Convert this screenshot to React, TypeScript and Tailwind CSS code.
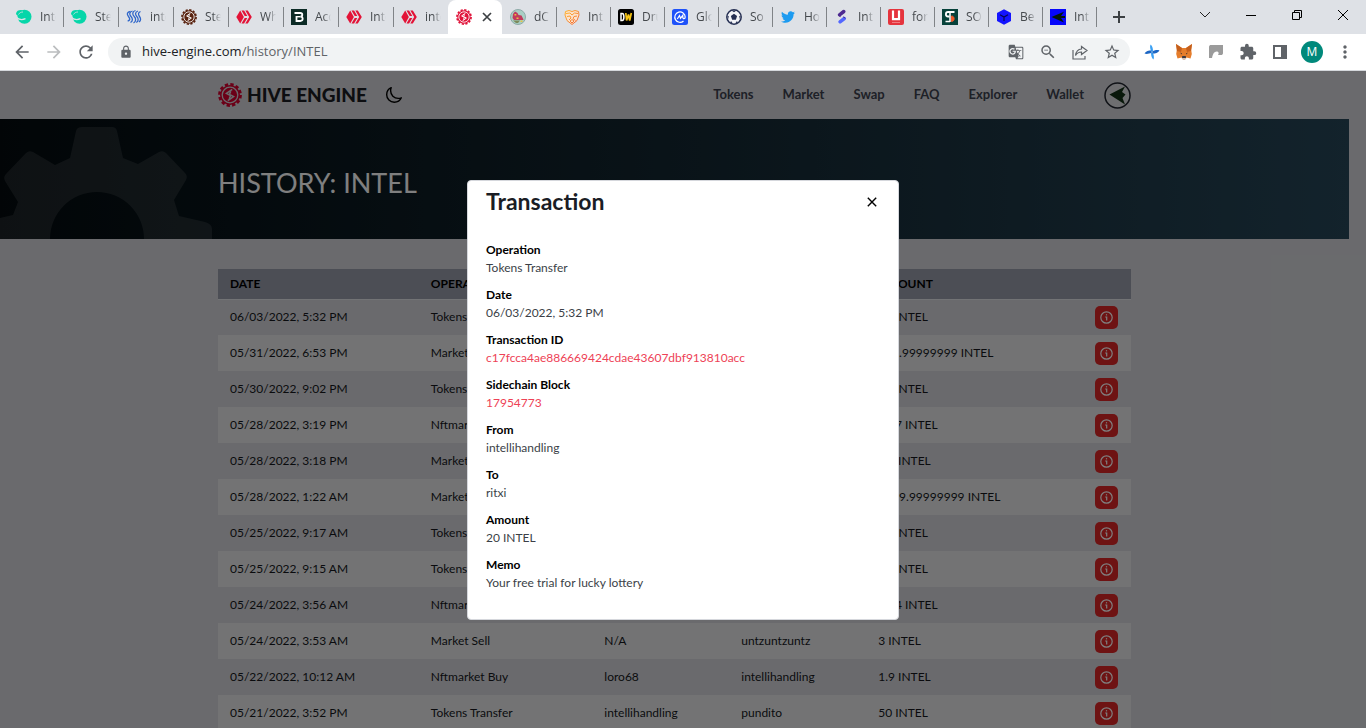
import type { ReactNode } from 'react'
import { FaTwitter } from 'react-icons/fa'
import { IoMoonOutline } from 'react-icons/io5'
import {
  MdArrowBack,
  MdArrowForward,
  MdExtension,
  MdGTranslate,
  MdLock,
  MdMoreVert,
  MdRefresh,
  MdStarBorder,
  MdZoomOut,
} from 'react-icons/md'

interface Tab {
  title: string
  icon: ReactNode
}

interface Row {
  date: string
  operation: string
  from: string
  to: string
  amount: string
}

const SteemIcon = () => (
  <svg viewBox="0 0 16 16" className="h-4 w-4">
    <circle cx="8.500" cy="7.800" r="7" fill="#06d6a9" />
    <path d="M0 4.500C.5 2 3 .8 6 1.200L4 7C2 7 .2 6.500 0 4.500z" fill="#06d6a9" />
    <path d="M0 8c3 3 6 3.200 9.500 1.700" stroke="#dee1e6" strokeWidth="1.300" fill="none" />
    <path d="M2.500 5.500C3.500 3.800 5 3 7 3" stroke="#dee1e6" strokeWidth=".8" fill="none" />
  </svg>
)

const WavesIcon = () => (
  <svg viewBox="0 0 16 16" className="h-4 w-4" fill="none" stroke="#2f66c9" strokeWidth="1.300">
    <path d="M4.500 2.500C1 3 .5 5 2.500 7.500s1.500 4-.8 4.500" />
    <path d="M6.500 2C3 3 3.200 5.500 5 7.500s2 4.500-.5 6" />
    <path d="M9.500 1.500c-3.500 1-3.300 4-1.300 6s2 5-.7 6.500" />
    <path d="M12 2c-3 1-3 3.500-1.200 5.500s2 4.500-.5 6" />
    <path d="M14.500 2.500c-2.500 1-2.500 3-1 5s1.500 4-.5 5.500" />
  </svg>
)

/** Toothed ring shared by the Hive Engine mark and its favicons. */
const Cog = ({ color, inner, className }: { color: string; inner: string; className: string }) => (
  <svg viewBox="0 0 24 24" className={className}>
    <circle cx="12" cy="12" r="10.600" fill="none" stroke={color} strokeWidth="2.600" strokeDasharray="3.330 2.220" />
    <circle cx="12" cy="12" r="10" fill={color} />
    <circle cx="12" cy="12" r="7.800" fill="none" stroke={inner} strokeWidth="1.300" />
    <path d="M14.200 6.300 8.400 10.400l4.200 2.200-1.400 3.200M9.800 17.700l5.800-4.100-4.200-2.200 1.400-3.200" fill="none" stroke={inner} strokeWidth="1.500" />
  </svg>
)

const HiveIcon = () => (
  <svg viewBox="0 0 16 16" className="h-4 w-4" fill="#e31337">
    <path d="M4.200 1.500 7.900 8l-3.700 6.500L.3 8z" />
    <path d="M5.500 1.500h2.600l3.200 5.500H8.700zM8.700 9h2.600l-3.200 5.500H5.500z" />
    <path d="M9.300 1.500h2.500L15.800 8l-4 6.500H9.300L13.200 8z" />
  </svg>
)

const BoldBIcon = () => (
  <svg viewBox="0 0 16 16" className="h-4 w-4">
    <rect width="16" height="16" fill="#0c2b26" />
    <path d="M3.500 4h5.700c2.800 0 2.800 3.700 0 3.700 3.300 0 3.300 4.300 0 4.300H5.500V7" fill="none" stroke="#fff" strokeWidth="1.800" />
    <path d="M6 7.700h3" stroke="#fff" strokeWidth="1.400" />
  </svg>
)

const ParkIcon = () => (
  <svg viewBox="0 0 16 16" className="h-4 w-4">
    <circle cx="8" cy="8" r="7.500" fill="#a9cfc4" stroke="#8eaaa8" />
    <path d="M3 5l2-2.500L7.500 4l1 2 3 .5L13 9.500l.5 1.500H4L2.500 9z" fill="#c23a5c" />
    <path d="M4.500 5h1.800v1.500H4.500zM6.500 8.500h2V10h-2zM10.500 11.500h2V13h-2z" fill="#e8c33e" />
    <path d="M3 11.500h7l-2 2.500H6z" fill="#7d8a5b" />
  </svg>
)

const LionIcon = () => (
  <svg viewBox="0 0 16 16" className="h-4 w-4">
    <defs>
      <linearGradient id="lion" x1="0" y1="0" x2="1" y2="1">
        <stop offset="0" stopColor="#ffb52e" />
        <stop offset="1" stopColor="#f1653a" />
      </linearGradient>
    </defs>
    <path d="M1.500 2.500 5 1.500l3 1 3-1 3.500 1L15 6l-2 5.500-5 4-5-4L1 6z" fill="#fbe3cd" stroke="url(#lion)" />
    <path d="M2 4.500 6 4l2 2 2.500-2 3.500.5M3 7.500l3-.5 1 2-2 2M13 7l-3 .5-1 2 2.500 2M6 12l2-1.500 2 1.500-2 2z" fill="none" stroke="url(#lion)" />
  </svg>
)

const DwIcon = () => (
  <svg viewBox="0 0 16 16" className="h-4 w-4">
    <rect width="16" height="16" rx="2.500" fill="#000" />
    <path d="M3 4.500h1.200c1.200 0 1.700.8 1.700 3.500s-.5 3.500-1.700 3.500H3z" fill="none" stroke="#fff" strokeWidth="1.500" />
    <path d="M7.800 4l.8 7.500L10.500 5.500l1.200 6L13.300 4" fill="none" stroke="#f7c514" strokeWidth="1.700" />
  </svg>
)

const CoinIcon = () => (
  <svg viewBox="0 0 16 16" className="h-4 w-4">
    <rect width="16" height="16" rx="2.500" fill="#1f52f9" />
    <path
      d="M11.500 12A5.200 5.200 0 1 1 13.200 8c0 2.200-2.400 2-2.400.3V6.300L8.500 9.300 7.500 6.500 5.300 10"
      fill="none"
      stroke="#fff"
      strokeWidth="1.200"
    />
  </svg>
)

const BallIcon = () => (
  <svg viewBox="0 0 16 16" className="h-4 w-4">
    <circle cx="8" cy="8" r="7.200" fill="#f2f3f7" stroke="#252f52" strokeWidth="1.500" />
    <path d="M8 4.800l3.100 2.300-1.200 3.700H6.100L4.900 7.100z" fill="#252f52" />
    <path
      d="M5.500 1.500h5L8 3.200zM1.300 6.300l1.500 1-.7 3zM14.700 6.300l-1.500 1 .7 3zM3.500 13l2.300-.5.7 2zM12.500 13l-2.300-.5-.7 2z"
      fill="#252f52"
    />
  </svg>
)

const SplitIcon = () => (
  <svg viewBox="0 0 16 16" className="h-4 w-4" strokeWidth="3.500" strokeLinecap="round">
    <path d="M5.500 5.800 9.800 2.500" stroke="#4d2a91" />
    <path d="M6 12.800 10.300 9.500" stroke="#5468ff" />
    <path d="M4.800 6.500l1.500 1M9.500 8l1.500 1" stroke="#4d2a91" strokeWidth="1" />
  </svg>
)

const UIcon = () => (
  <svg viewBox="0 0 16 16" className="h-4 w-4">
    <rect width="16" height="16" rx="2" fill="#e5343d" />
    <path d="M5 1.500v8.700h6V1.500" fill="none" stroke="#fff" strokeWidth="2.200" />
    <path d="M4 13.500h8" stroke="#f07b80" />
  </svg>
)

const SIcon = () => (
  <svg viewBox="0 0 16 16" className="h-4 w-4">
    <rect width="16" height="16" fill="#07423b" />
    <path d="M12.500 3H6C3.200 3 3.200 7.500 6 7.500h1.500" fill="none" stroke="#fff" strokeWidth="1.800" />
    <path d="M8 3v10M3.500 12.500h4.500" stroke="#fff" strokeWidth="1.500" />
    <path d="M9.500 7c3.500 0 3.500 5.500 0 5.500z" fill="#f15a29" stroke="#f15a29" />
  </svg>
)

const CubeIcon = () => (
  <svg viewBox="0 0 16 16" className="h-4 w-4">
    <path d="M8 .3 15 4v8l-7 3.800L1 12V4z" fill="#1414ff" />
    <path d="M4 5.800l4 2.300 4-2.300M8 8.100V12" fill="none" stroke="#07074d" strokeWidth="1.100" />
  </svg>
)

const ArrowheadIcon = () => (
  <svg viewBox="0 0 16 16" className="h-4 w-4">
    <rect width="16" height="16" fill="#0606fb" />
    <path d="M1.500 8 14 2.800 11 7h4v2h-4l3 4.500z" fill="#03160a" />
  </svg>
)

const FoxIcon = () => (
  <svg viewBox="0 0 18 18" className="h-[18px] w-[18px]">
    <path d="M1 1l6 4h4l6-4-.8 6 .6 4-1.300 4.500-4-1L10 16H8l-1.500-1.500-4 1L1.200 11l.6-4z" fill="#e57d2b" />
    <path d="M1 1l6 4-1 4-4-1zM17 1l-6 4 1 4 4-1z" fill="#c45f1c" />
    <path d="M5 9.500l2 1-.3 1zM13 9.500l-2 1 .3 1z" fill="#2a2a33" />
    <path d="M7.200 13h3.600l.2 2.500H7z" fill="#3b3b43" />
    <path d="M6.500 15h5L10 17H8z" fill="#d5bfb2" />
  </svg>
)

const InfoIcon = () => (
  <svg viewBox="0 0 13 13" className="h-[13px] w-[13px]" fill="none" stroke="currentColor">
    <circle cx="6.500" cy="6.500" r="5.700" strokeWidth="1.200" />
    <path d="M5.200 6h1.500v3.500" strokeWidth="1.200" />
    <path d="M5.900 3.200h1.200v1.200H5.900z" fill="currentColor" stroke="none" />
  </svg>
)

const leftTabs: Tab[] = [
  { title: 'Inte', icon: <SteemIcon /> },
  { title: 'Stee', icon: <SteemIcon /> },
  { title: 'inte', icon: <WavesIcon /> },
  { title: 'Stee', icon: <Cog color="#5a2411" inner="#fff" className="h-4 w-4" /> },
  { title: 'Wha', icon: <HiveIcon /> },
  { title: 'Acco', icon: <BoldBIcon /> },
  { title: 'Inte', icon: <HiveIcon /> },
  { title: 'inte', icon: <HiveIcon /> },
]

const rightTabs: Tab[] = [
  { title: 'dC', icon: <ParkIcon /> },
  { title: 'Int', icon: <LionIcon /> },
  { title: 'Dru', icon: <DwIcon /> },
  { title: 'Glo', icon: <CoinIcon /> },
  { title: 'So', icon: <BallIcon /> },
  { title: 'Ho', icon: <FaTwitter className="h-[14px] w-4 text-[#1d9bf0]" /> },
  { title: 'Int', icon: <SplitIcon /> },
  { title: 'for', icon: <UIcon /> },
  { title: 'SO', icon: <SIcon /> },
  { title: 'Be', icon: <CubeIcon /> },
  { title: 'Int', icon: <ArrowheadIcon /> },
]

const navLinks = ['Tokens', 'Market', 'Swap', 'FAQ', 'Explorer', 'Wallet']

const rows: Row[] = [
  { date: '06/03/2022, 5:32 PM', operation: 'Tokens Transfer', from: 'intellihandling', to: 'ritxi', amount: '20 INTEL' },
  { date: '05/31/2022, 6:53 PM', operation: 'Market Sell', from: 'N/A', to: 'untzuntzuntz', amount: '999.99999999 INTEL' },
  { date: '05/30/2022, 9:02 PM', operation: 'Tokens Transfer', from: 'intellihandling', to: 'pundito', amount: '20 INTEL' },
  { date: '05/28/2022, 3:19 PM', operation: 'Nftmarket Buy', from: 'loro68', to: 'intellihandling', amount: '2.97 INTEL' },
  { date: '05/28/2022, 3:18 PM', operation: 'Market Buy', from: 'N/A', to: 'intellihandling', amount: '1.9 INTEL' },
  { date: '05/28/2022, 1:22 AM', operation: 'Market Sell', from: 'N/A', to: 'untzuntzuntz', amount: '1999.99999999 INTEL' },
  { date: '05/25/2022, 9:17 AM', operation: 'Tokens Transfer', from: 'intellihandling', to: 'pundito', amount: '50 INTEL' },
  { date: '05/25/2022, 9:15 AM', operation: 'Tokens Transfer', from: 'intellihandling', to: 'ritxi', amount: '50 INTEL' },
  { date: '05/24/2022, 3:56 AM', operation: 'Nftmarket Buy', from: 'loro68', to: 'intellihandling', amount: '2.94 INTEL' },
  { date: '05/24/2022, 3:53 AM', operation: 'Market Sell', from: 'N/A', to: 'untzuntzuntz', amount: '3 INTEL' },
  { date: '05/22/2022, 10:12 AM', operation: 'Nftmarket Buy', from: 'loro68', to: 'intellihandling', amount: '1.9 INTEL' },
  { date: '05/21/2022, 3:52 PM', operation: 'Tokens Transfer', from: 'intellihandling', to: 'pundito', amount: '50 INTEL' },
]

const details = [
  { label: 'Operation', value: 'Tokens Transfer' },
  { label: 'Date', value: '06/03/2022, 5:32 PM' },
  { label: 'Transaction ID', value: 'c17fcca4ae886669424cdae43607dbf913810acc', link: true },
  { label: 'Sidechain Block', value: '17954773', link: true },
  { label: 'From', value: 'intellihandling' },
  { label: 'To', value: 'ritxi' },
  { label: 'Amount', value: '20 INTEL' },
  { label: 'Memo', value: 'Your free trial for lucky lottery' },
]

function TabItem({ tab, width, divider }: { tab: Tab; width: string; divider: boolean }) {
  return (
    <button type="button" className={`flex h-full items-center ${width}`}>
      <span className="ml-2 shrink-0">{tab.icon}</span>
      <span className="ml-2 w-4 overflow-hidden text-left text-xs whitespace-nowrap text-[#45494d] mask-r-from-50%">
        {tab.title}
      </span>
      {divider && <span className="-mr-px ml-auto h-5 w-px bg-[#808387]" />}
    </button>
  )
}

function BrowserChrome() {
  return (
    <div className="font-['Open_Sans',sans-serif]">
      <div className="flex h-[34px] items-center bg-[#dee1e6] pl-2">
        {leftTabs.map((tab, i) => (
          <TabItem key={i} tab={tab} width="w-[55px]" divider={i < leftTabs.length - 1} />
        ))}
        <div className="flex h-full w-[54px] items-center rounded-t-lg bg-white">
          <Cog color="#e0153b" inner="#fff" className="ml-2 h-4 w-4" />
          <button type="button" aria-label="Close tab" className="ml-[10px]">
            <svg viewBox="0 0 10 10" className="h-[10px] w-[10px]" stroke="#3c4043" strokeWidth="1.700">
              <path d="M1 1l8 8M9 1 1 9" />
            </svg>
          </button>
        </div>
        {rightTabs.map((tab, i) => (
          <TabItem key={i} tab={tab} width="w-[54px]" divider />
        ))}
        <button type="button" aria-label="New tab" className="ml-[17px]">
          <svg viewBox="0 0 12 12" className="h-3 w-3" stroke="#3c4043" strokeWidth="2">
            <path d="M6 0v12M0 6h12" />
          </svg>
        </button>
        <div className="mr-[18px] mb-1 ml-auto flex items-center gap-[36px]">
          <button type="button" aria-label="Search tabs">
            <svg viewBox="0 0 10 10" className="h-[10px] w-[10px]" fill="none" stroke="#222">
              <path d="M0 2l5 5 5-5" />
            </svg>
          </button>
          <button type="button" aria-label="Minimize">
            <svg viewBox="0 0 10 10" className="h-[10px] w-[10px]" stroke="#000">
              <path d="M0 5.500h10" />
            </svg>
          </button>
          <button type="button" aria-label="Restore">
            <svg viewBox="0 0 10 10" className="h-[10px] w-[10px]" fill="none" stroke="#000">
              <path d="M.5 2.500h7v7h-7zM2.500 2.500v-2h7v7h-2" />
            </svg>
          </button>
          <button type="button" aria-label="Close window">
            <svg viewBox="0 0 10 10" className="h-[10px] w-[10px]" stroke="#000">
              <path d="M0 0l10 10M10 0 0 10" />
            </svg>
          </button>
        </div>
      </div>

      <div className="flex h-[37px] items-center border-b border-[#d5d8dc] bg-white pr-[11px] pl-3 text-[#5f6368]">
        <button type="button" aria-label="Back">
          <MdArrowBack className="h-5 w-5" />
        </button>
        <button type="button" aria-label="Forward" className="ml-3 text-[#bbbdbf]">
          <MdArrowForward className="h-5 w-5" />
        </button>
        <button type="button" aria-label="Reload" className="ml-3">
          <MdRefresh className="h-5 w-5" />
        </button>
        <div className="ml-3 flex h-7 flex-1 items-center rounded-full bg-[#f1f3f4] pr-[9px] pl-[11px]">
          <MdLock className="h-[14px] w-[14px] shrink-0" />
          <div className="ml-[9px] flex-1 text-[13px]">
            <span className="text-[#202124]">hive-engine.com</span>/history/INTEL
          </div>
          <div className="flex items-center gap-[14px]">
            <button type="button" aria-label="Translate" className="flex w-[18px] justify-center">
              <MdGTranslate className="h-4 w-4" />
            </button>
            <button type="button" aria-label="Zoom out">
              <MdZoomOut className="h-[18px] w-[18px]" />
            </button>
            <button type="button" aria-label="Share" className="flex w-[18px] justify-center">
              <svg viewBox="0 0 16 16" className="h-4 w-4" fill="none" stroke="currentColor" strokeWidth="1.200">
                <path d="M1 6v9h12v-3M9.500 2.500 15 6.500l-5.500 4V8C6.500 8 5 9 3.500 11.500 4 7.500 6 5.300 9.500 5z" />
              </svg>
            </button>
            <button type="button" aria-label="Bookmark">
              <MdStarBorder className="h-[18px] w-[18px]" />
            </button>
          </div>
        </div>
        <div className="ml-[13px] flex items-center gap-[14px]">
          <svg viewBox="0 0 18 18" className="h-[18px] w-[18px]">
            <path d="M8 8.500C7.500 6 6.500 4 7.500 1.500 9.500 3 10 5.500 10 8.500z" fill="#3aa0f3" />
            <path d="M10 9.500c.5 2.500 1.500 4.500.5 7C8.500 15 8 12.500 8 9.500z" fill="#3aa0f3" />
            <path d="M9.500 8c2.500-.5 4.500-1.500 7-.5-1.500 2.500-4 3-7 3zM8.500 10c-2.500.5-4.500 1.500-7 .5C3 8 5.500 7.500 8.500 7.500z" fill="#1c66c4" />
          </svg>
          <FoxIcon />
          <svg viewBox="0 0 18 18" className="h-[18px] w-[18px]" fill="#9b9b9b">
            <path d="M2 4c0-1.500 1-2 2-2h12v8c0 1.500-1 2-2 2h-3c2-3-1-4.500-3-3-2 1-2.500 4-3 6H2z" />
          </svg>
          <MdExtension className="h-[18px] w-[18px]" />
          <svg viewBox="0 0 18 18" className="h-[18px] w-[18px]" fill="currentColor">
            <path d="M2 2h14v14H2zM4 4v10h6V4z" fillRule="evenodd" />
          </svg>
          <span className="-mx-0.5 flex h-[22px] w-[22px] items-center justify-center rounded-full bg-[#00897b] text-xs text-white">
            M
          </span>
          <button type="button" aria-label="Menu">
            <MdMoreVert className="h-5 w-5" />
          </button>
        </div>
      </div>
    </div>
  )
}

function SiteHeader() {
  return (
    <header className="mx-auto flex h-12 max-w-[913px] items-center">
      <a href="#" className="flex items-center">
        <Cog color="#d6002f" inner="#d3d5d9" className="h-6 w-6" />
        <span className="ml-[5px] text-[19px] font-black whitespace-nowrap text-[#1a1c22]">HIVE ENGINE</span>
      </a>
      <button type="button" aria-label="Dark mode" className="ml-[18px] text-black">
        <IoMoonOutline className="h-[18px] w-[18px] [&_path]:stroke-[40px]" />
      </button>
      <nav className="ml-auto flex items-center gap-[29px] text-[13px] font-bold text-[#3c414e]">
        {navLinks.map((link) => (
          <a key={link} href="#">
            {link}
          </a>
        ))}
      </nav>
      <a href="#" aria-label="Account" className="ml-5">
        <svg viewBox="0 0 27 27" className="h-[27px] w-[27px]">
          <circle cx="13.500" cy="13.500" r="12.500" fill="#dcdde0" stroke="#20242e" strokeWidth="1.500" />
          <path d="M5.500 12.500 21 4.500l-3 5.500 3.500 2.500-3 3.500 2.500 6.500z" fill="#123016" />
        </svg>
      </a>
    </header>
  )
}

function Banner() {
  return (
    <section className="relative flex h-[120px] items-center bg-linear-to-r from-[#040b0f] to-[#264658]">
      <svg viewBox="0 0 212 120" className="absolute inset-y-0 left-0 h-[120px] w-[212px]">
        <path
          fill="#fff"
          fillOpacity=".1"
          fillRule="evenodd"
          d="M82 8h30q4 0 5 4l6 27 15 6 21-12q4-2 7 1l19 20q3 3 1 7l-12 20 5 16 26 6q7 2 7 7v10h-68a47 47 0 0 0-94 0H0V99l13-3 5-13L5 62q-2-4 1-7l20-21q3-3 7-1l22 13 15-7 6-27q1-4 6-4z"
        />
      </svg>
      <div className="mx-auto w-full max-w-[913px]">
        <h1 className="mt-2 text-[27px] leading-8 text-white">HISTORY: INTEL</h1>
      </div>
    </section>
  )
}

function HistoryTable() {
  return (
    <table className="mx-auto mt-[30px] w-full max-w-[913px] table-fixed border-collapse text-left text-xs text-[#15171c]">
      <thead>
        <tr className="h-[30px] border-b border-[#e4e6ea] bg-[#999dab] font-bold text-black">
          <th className="w-[22%] pl-3">DATE</th>
          <th className="w-[19%] pl-3">OPERATION</th>
          <th className="w-[15%] pl-3">FROM</th>
          <th className="w-[15%] pl-3">TO</th>
          <th className="w-[21%] pl-3">AMOUNT</th>
          <th className="w-[8%]" />
        </tr>
      </thead>
      <tbody>
        {rows.map((row) => (
          <tr key={row.date} className="h-9 even:bg-[#e6e7e8]">
            <td className="pl-3">{row.date}</td>
            <td className="pl-3">{row.operation}</td>
            <td className="pl-3">{row.from}</td>
            <td className="pl-3">{row.to}</td>
            <td className="pl-3">{row.amount}</td>
            <td className="pr-[13px]">
              <button
                type="button"
                aria-label={`Details for ${row.date}`}
                className="ml-auto flex h-[23px] w-[23px] items-center justify-center rounded-[5px] bg-[#dc2626] text-white"
              >
                <InfoIcon />
              </button>
            </td>
          </tr>
        ))}
      </tbody>
    </table>
  )
}

function TransactionModal() {
  return (
    <div
      role="dialog"
      aria-labelledby="modal-title"
      className="w-full max-w-[432px] rounded-sm border border-[#d5d7dc] bg-white px-[18px] pb-[18px] text-xs"
    >
      <div className="flex h-[42px] items-center justify-between">
        <h2 id="modal-title" className="text-[23px] font-bold text-[#1a1d25]">
          Transaction
        </h2>
        <button type="button" aria-label="Close" className="p-[3px] text-black">
          <svg viewBox="0 0 10 10" className="h-[10px] w-[10px]" stroke="currentColor" strokeWidth="1.400">
            <path d="M.8.8l8.400 8.400M9.200.8.8 9.200" />
          </svg>
        </button>
      </div>
      <dl className="mt-[18px]">
        {details.map(({ label, value, link }) => (
          <div key={label} className="mb-[9px] leading-[18px]">
            <dt className="font-bold text-black">{label}</dt>
            <dd className="text-[#3b3f47]">
              {link ? (
                <a href="#" className="text-[#ee4256]">
                  {value}
                </a>
              ) : (
                value
              )}
            </dd>
          </div>
        ))}
      </dl>
    </div>
  )
}

export default function App() {
  return (
    <div className="flex h-screen flex-col overflow-hidden">
      <BrowserChrome />
      <div className="relative flex-1 overflow-hidden bg-[#d4d5da] font-['Lato',sans-serif]">
        <div className="pr-[17px]">
          <SiteHeader />
          <Banner />
          <HistoryTable />
        </div>
        {/* Backdrop dims the page behind the modal */}
        <div className="absolute inset-0 flex items-center justify-center bg-black/50">
          <TransactionModal />
        </div>
      </div>
    </div>
  )
}
